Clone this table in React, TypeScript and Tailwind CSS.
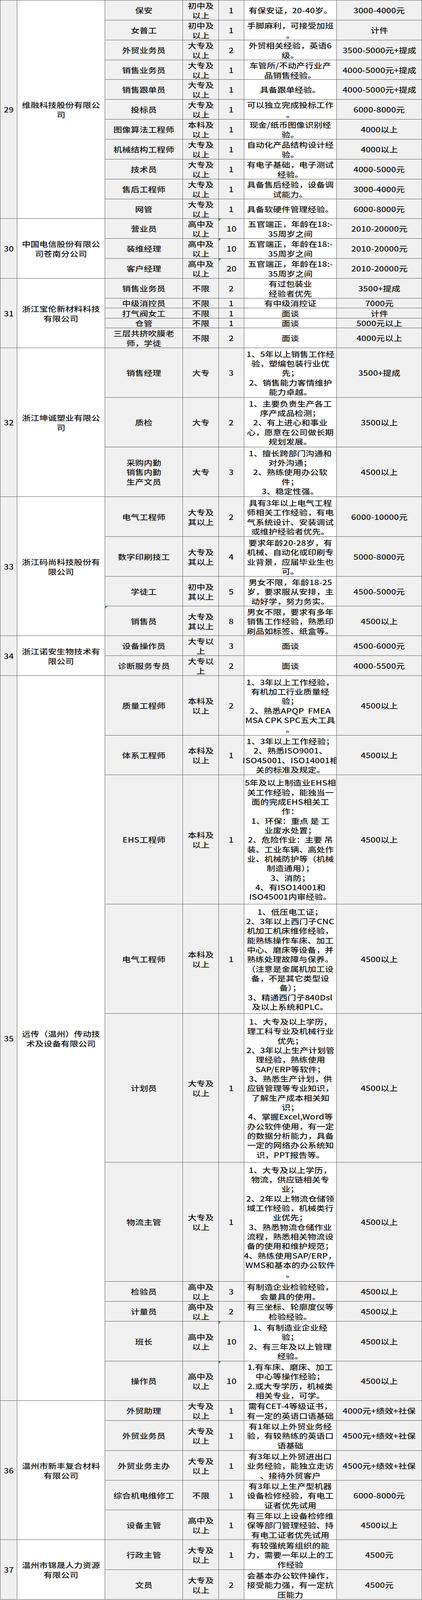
import * as React from 'react'
import clsx from 'clsx'

interface Job {
  pos: string
  edu: string
  n: string
  req: string
  pay: string
  /** row height in text lines */
  lines: number
  /** little green excel marker in the top-left corner */
  flag?: 'n' | 'pos'
}

interface Company {
  no: number
  name: string
  jobs: Job[]
}

// design height of one text line at a 4377px tall frame
const BASE_UNIT = 27.17
const TOTAL_LINES = 161

const companies: Company[] = [
  {
    no: 29,
    name: '维融科技股份有限公\n司',
    jobs: [
      { pos: '保安', edu: '初中及\n以上', n: '1', req: '有保安证，20-40岁。', pay: '3000-4000元', lines: 2 },
      { pos: '女普工', edu: '初中及\n以上', n: '1', req: '手脚麻利，可接受加班\n。', pay: '计件', lines: 2 },
      { pos: '外贸业务员', edu: '大专及\n以上', n: '2', req: '外贸相关经验，英语6\n级。', pay: '3500-5000元+提成', lines: 2 },
      { pos: '销售业务员', edu: '大专及\n以上', n: '1', req: '车管所/不动产行业产\n品销售经验。', pay: '4000-5000元+提成', lines: 2 },
      { pos: '销售跟单员', edu: '大专及\n以上', n: '1', req: '具备跟单经验。', pay: '4000-5000元+提成', lines: 2 },
      { pos: '投标员', edu: '大专及\n以上', n: '1', req: '可以独立完成投标工作\n。', pay: '6000-8000元', lines: 2 },
      { pos: '图像算法工程师', edu: '本科及\n以上', n: '1', req: '现金/纸币图像识别经\n验。', pay: '4000以上', lines: 2 },
      { pos: '机械结构工程师', edu: '大专及\n以上', n: '1', req: '自动化产品结构设计经\n验。', pay: '4000以上', lines: 2 },
      { pos: '技术员', edu: '大专及\n以上', n: '1', req: '有电子基础，电子测试\n经验。', pay: '4000-5000元', lines: 2 },
      { pos: '售后工程师', edu: '大专及\n以上', n: '1', req: '具备售后经验，设备调\n试能力。', pay: '3000-4000元', lines: 2 },
      { pos: '网管', edu: '大专及\n以上', n: '1', req: '具备软硬件管理经验。', pay: '6000-8000元', lines: 2 },
    ],
  },
  {
    no: 30,
    name: '中国电信股份有限公\n司苍南分公司',
    jobs: [
      { pos: '营业员', edu: '高中及\n以上', n: '10', req: '五官端正，年龄在18:-\n35周岁之间', pay: '2010-20000元', lines: 2, flag: 'n' },
      { pos: '装维经理', edu: '高中及\n以上', n: '10', req: '五官端正，年龄在18:-\n35周岁之间', pay: '2010-20000元', lines: 2, flag: 'n' },
      { pos: '客户经理', edu: '高中及\n以上', n: '20', req: '五官端正，年龄在18:-\n35周岁之间', pay: '2010-20000元', lines: 2, flag: 'n' },
    ],
  },
  {
    no: 31,
    name: '浙江宝伦新材料科技\n有限公司',
    jobs: [
      { pos: '销售业务员', edu: '不限', n: '2', req: '有过包装业\n经验者优先', pay: '3500+提成', lines: 2 },
      { pos: '中级消控员', edu: '不限', n: '1', req: '有中级消控证', pay: '7000元', lines: 1 },
      { pos: '打气阀女工', edu: '不限', n: '1', req: '面谈', pay: '计件', lines: 1 },
      { pos: '仓管', edu: '不限', n: '1', req: '面谈', pay: '5000元以上', lines: 1 },
      { pos: '三层共挤吹膜老\n师，学徒', edu: '不限', n: '2', req: '面谈', pay: '4000元以上', lines: 2 },
    ],
  },
  {
    no: 32,
    name: '浙江坤诚塑业有限公\n司',
    jobs: [
      {
        pos: '销售经理',
        edu: '大专',
        n: '3',
        req: '1、5年以上销售工作经\n验，塑编包装行业优\n先；\n2、销售能力客情维护\n能力卓越。',
        pay: '3500+提成',
        lines: 5,
      },
      {
        pos: '质检',
        edu: '大专',
        n: '2',
        req: '1、主要负责生产各工\n序产成品检测；\n2、有上进心和事业\n心，愿意在公司做长期\n规划发展。',
        pay: '3500以上',
        lines: 5,
      },
      {
        pos: '采购内勤\n销售内勤\n生产文员',
        edu: '大专',
        n: '3',
        req: '1、擅长跨部门沟通和\n对外沟通；\n2、熟练使用办公软\n件；\n3、稳定性强。',
        pay: '4500以上',
        lines: 5,
      },
    ],
  },
  {
    no: 33,
    name: '浙江码尚科技股份有\n限公司',
    jobs: [
      {
        pos: '电气工程师',
        edu: '大专及\n其以上',
        n: '2',
        req: '具有3年以上电气工程\n师相关工作经验，有电\n气系统设计、安装调试\n或维护经验者优先。',
        pay: '6000-10000元',
        lines: 4,
      },
      {
        pos: '数字印刷技工',
        edu: '大专及\n其以上',
        n: '4',
        req: '要求年龄20-28岁，有\n机械、自动化或印刷专\n业背景，应届毕业生也\n可。',
        pay: '5000-8000元',
        lines: 4,
      },
      {
        pos: '学徒工',
        edu: '初中及\n其以上',
        n: '5',
        req: '男女不限，年龄18-25\n岁，要求服从安排，主\n动好学，努力务实。',
        pay: '4500-5000元',
        lines: 3,
      },
      {
        pos: '销售员',
        edu: '大专及\n其以上',
        n: '8',
        req: '男女不限，要求有多年\n销售工作经验，熟悉印\n刷品如标签、纸盒等。',
        pay: '4500以上',
        lines: 3,
        flag: 'pos',
      },
    ],
  },
  {
    no: 34,
    name: '浙江诺安生物技术有\n限公司',
    jobs: [
      { pos: '设备操作员', edu: '大专以\n上', n: '3', req: '面谈', pay: '4500-6000元', lines: 2 },
      { pos: '诊断服务专员', edu: '大专以\n上', n: '2', req: '面谈', pay: '4000-5500元', lines: 2 },
    ],
  },
  {
    no: 35,
    name: '远传（温州）传动技\n术及设备有限公司',
    jobs: [
      {
        pos: '质量工程师',
        edu: '本科及\n以上',
        n: '2',
        req: '1、3年以上工作经验，\n有机加工行业质量经\n验；\n2、熟悉APQP  FMEA\nMSA CPK SPC五大工具\n。',
        pay: '4500以上',
        lines: 6,
      },
      {
        pos: '体系工程师',
        edu: '本科及\n以上',
        n: '1',
        req: '1、3年以上工作经验；\n2、熟悉ISO9001、\nISO45001、ISO14001相\n关的标准及规定。',
        pay: '4500以上',
        lines: 4,
      },
      {
        pos: 'EHS工程师',
        edu: '本科及\n以上',
        n: '1',
        req:
          '5年及以上制造业EHS相\n关工作经验，能独当一\n面的完成EHS相关工\n作：\n1、环保：重点 是 工\n业废水处置；\n2、危险作业：主要 吊\n装、工业车辆、高处作\n业、机械防护等（机械\n制造通用）；\n3、消防；\n4、有ISO14001和\nISO45001内审经验。',
        pay: '4500以上',
        lines: 13,
      },
      {
        pos: '电气工程师',
        edu: '本科及\n以上',
        n: '1',
        req:
          '1、低压电工证；\n2、3年以上西门子CNC\n机加工机床维修经验，\n能熟练操作车床、加工\n中心、磨床等设备，并\n熟练处理故障与保养。\n（注意是金属机加工设\n备，不是其它类型设\n备）；\n3、精通西门子840Dsl\n及以上系统和PLC。',
        pay: '4500以上',
        lines: 11,
      },
      {
        pos: '计划员',
        edu: '大专及\n以上',
        n: '1',
        req:
          '1、大专及以上学历，\n理工科专业及机械行业\n优先；\n2、3年以上生产计划管\n理经验，熟练使用\nSAP/ERP等软件；\n3、熟悉生产计划，供\n应链管理等专业知识，\n了解生产成本相关知\n识；\n4、掌握Excel,Word等\n办公软件使用，有一定\n的数据分析能力，具备\n一定的网络办公系统知\n识，PPT报告等。',
        pay: '4500以上',
        lines: 15,
      },
      {
        pos: '物流主管',
        edu: '大专及\n以上',
        n: '1',
        req:
          '1、大专及以上学历，\n物流，供应链相关专\n业；\n2、2年以上物流仓储领\n域工作经验，机械类行\n业优先；\n3、熟悉物流仓储作业\n流程，熟悉相关物流设\n备的使用和维护规范；\n4、熟练使用SAP/ERP，\nWMS和基本的办公软件\n。',
        pay: '4500以上',
        lines: 12,
      },
      { pos: '检验员', edu: '高中及\n以上', n: '3', req: '有制造企业检验经验，\n会量具的使用。', pay: '4500以上', lines: 2 },
      { pos: '计量员', edu: '高中及\n以上', n: '2', req: '有三坐标、轮廓度仪等\n检验经验。', pay: '4500以上', lines: 2 },
      {
        pos: '班长',
        edu: '高中及\n以上',
        n: '10',
        req: '1、有制造业企业经\n验；\n2、有三年及以上管理\n经验。',
        pay: '4500以上',
        lines: 4,
        flag: 'n',
      },
      {
        pos: '操作员',
        edu: '高中及\n以上',
        n: '10',
        req: '1.有车床、磨床、加工\n中心等操作经验；\n2.或大专学历，机械类\n相关专业，可学。',
        pay: '4500以上',
        lines: 4,
        flag: 'n',
      },
    ],
  },
  {
    no: 36,
    name: '温州市新丰复合材料\n有限公司',
    jobs: [
      { pos: '外贸助理', edu: '大专及\n以上', n: '1', req: '需有CET-4等级证书，\n有一定的英语口语基础', pay: '4000元+绩效+社保', lines: 2 },
      { pos: '外贸业务员', edu: '大专及\n以上', n: '1', req: '有1年以上外贸业务经\n验，有较熟练的英语口\n语基础', pay: '4500元+绩效+社保', lines: 3 },
      { pos: '外贸业务主办', edu: '大专及\n以上', n: '1', req: '有3年以上外贸进出口\n业务经验，能独立走访\n、接待外贸客户', pay: '4500元+绩效+社保', lines: 3 },
      { pos: '综合机电维修工', edu: '不限', n: '1', req: '有3年以上生产型机器\n设备检修经验，有电工\n证者优先试用', pay: '6000-8000元', lines: 3 },
      { pos: '设备主管', edu: '高中及\n以上', n: '1', req: '有三年以上设备检修维\n保等部门管理经验、持\n有电工证者优先试用', pay: '4500以上', lines: 3 },
    ],
  },
  {
    no: 37,
    name: '温州市锦晟人力资源\n有限公司',
    jobs: [
      { pos: '行政主管', edu: '大专及\n以上', n: '1', req: '有较强统筹组织的能\n力，需要一年以上的工\n作经验', pay: '4500元', lines: 3 },
      { pos: '文员', edu: '大专及\n以上', n: '2', req: '会基本办公软件操作，\n接受能力强，有一定抗\n压能力', pay: '4500元', lines: 3 },
    ],
  },
]

const RatioCtx = React.createContext(1)

function Cell({
  className,
  flag,
  children,
}: {
  className?: string
  flag?: boolean
  children: React.ReactNode
}) {
  const r = React.useContext(RatioCtx)
  return (
    <div
      className={clsx(
        'relative flex min-h-0 shrink-0 items-center justify-center border-r border-b border-[#5c5c5c] text-center',
        className,
      )}
    >
      {flag && (
        <span className="absolute top-0 left-0 h-0 w-0 border-t-[6px] border-r-[6px] border-t-[#2f9a3c] border-r-transparent" />
      )}
      <span
        className="inline-block translate-y-[1px] whitespace-pre leading-[26px]"
        style={{ scale: `1.11 ${r}` }}
      >
        {children}
      </span>
    </div>
  )
}

export default function App() {
  // the sheet fills the window top to bottom, so rows follow the window height
  const [vh, setVh] = React.useState(() => window.innerHeight || 4377)
  React.useEffect(() => {
    const onResize = () => setVh(window.innerHeight || 4377)
    window.addEventListener('resize', onResize)
    return () => window.removeEventListener('resize', onResize)
  }, [])

  const unit = (vh - 2) / TOTAL_LINES
  const ratio = unit / BASE_UNIT

  // running line counter so row edges land on whole pixels
  let cum = 0
  const edge = (l: number) => Math.round(l * unit)

  return (
    <RatioCtx.Provider value={ratio}>
      <div className="w-[1080px] overflow-hidden border-t border-l border-[#5c5c5c] bg-white font-['Noto_Sans_CJK_SC','Noto_Sans',sans-serif] text-[20px] leading-[26px] font-medium text-[#141414]">
        {companies.map((c) => (
          <div key={c.no} className="flex">
            <Cell className="w-[43px] bg-[#f0f0f0]">{c.no}</Cell>
            <Cell className="w-[225px] bg-white">{c.name}</Cell>
            <div className="flex w-[811px] flex-col">
              {c.jobs.map((j, i) => {
                const top = edge(cum)
                cum += j.lines
                const h = edge(cum) - top
                return (
                  <div key={i} className="flex min-h-0 shrink-0" style={{ height: h }}>
                    <Cell className="w-[199px] bg-[#f0f0f0]" flag={j.flag === 'pos'}>
                      {j.pos}
                    </Cell>
                    <Cell className="w-[92px] bg-[#f0f0f0]">{j.edu}</Cell>
                    <Cell className="w-[65px] bg-[#f0f0f0]" flag={j.flag === 'n'}>
                      {j.n}
                    </Cell>
                    <Cell className="w-[237px] bg-white">{j.req}</Cell>
                    <Cell className="w-[218px] bg-[#f0f0f0]">{j.pay}</Cell>
                  </div>
                )
              })}
            </div>
          </div>
        ))}
      </div>
    </RatioCtx.Provider>
  )
}
